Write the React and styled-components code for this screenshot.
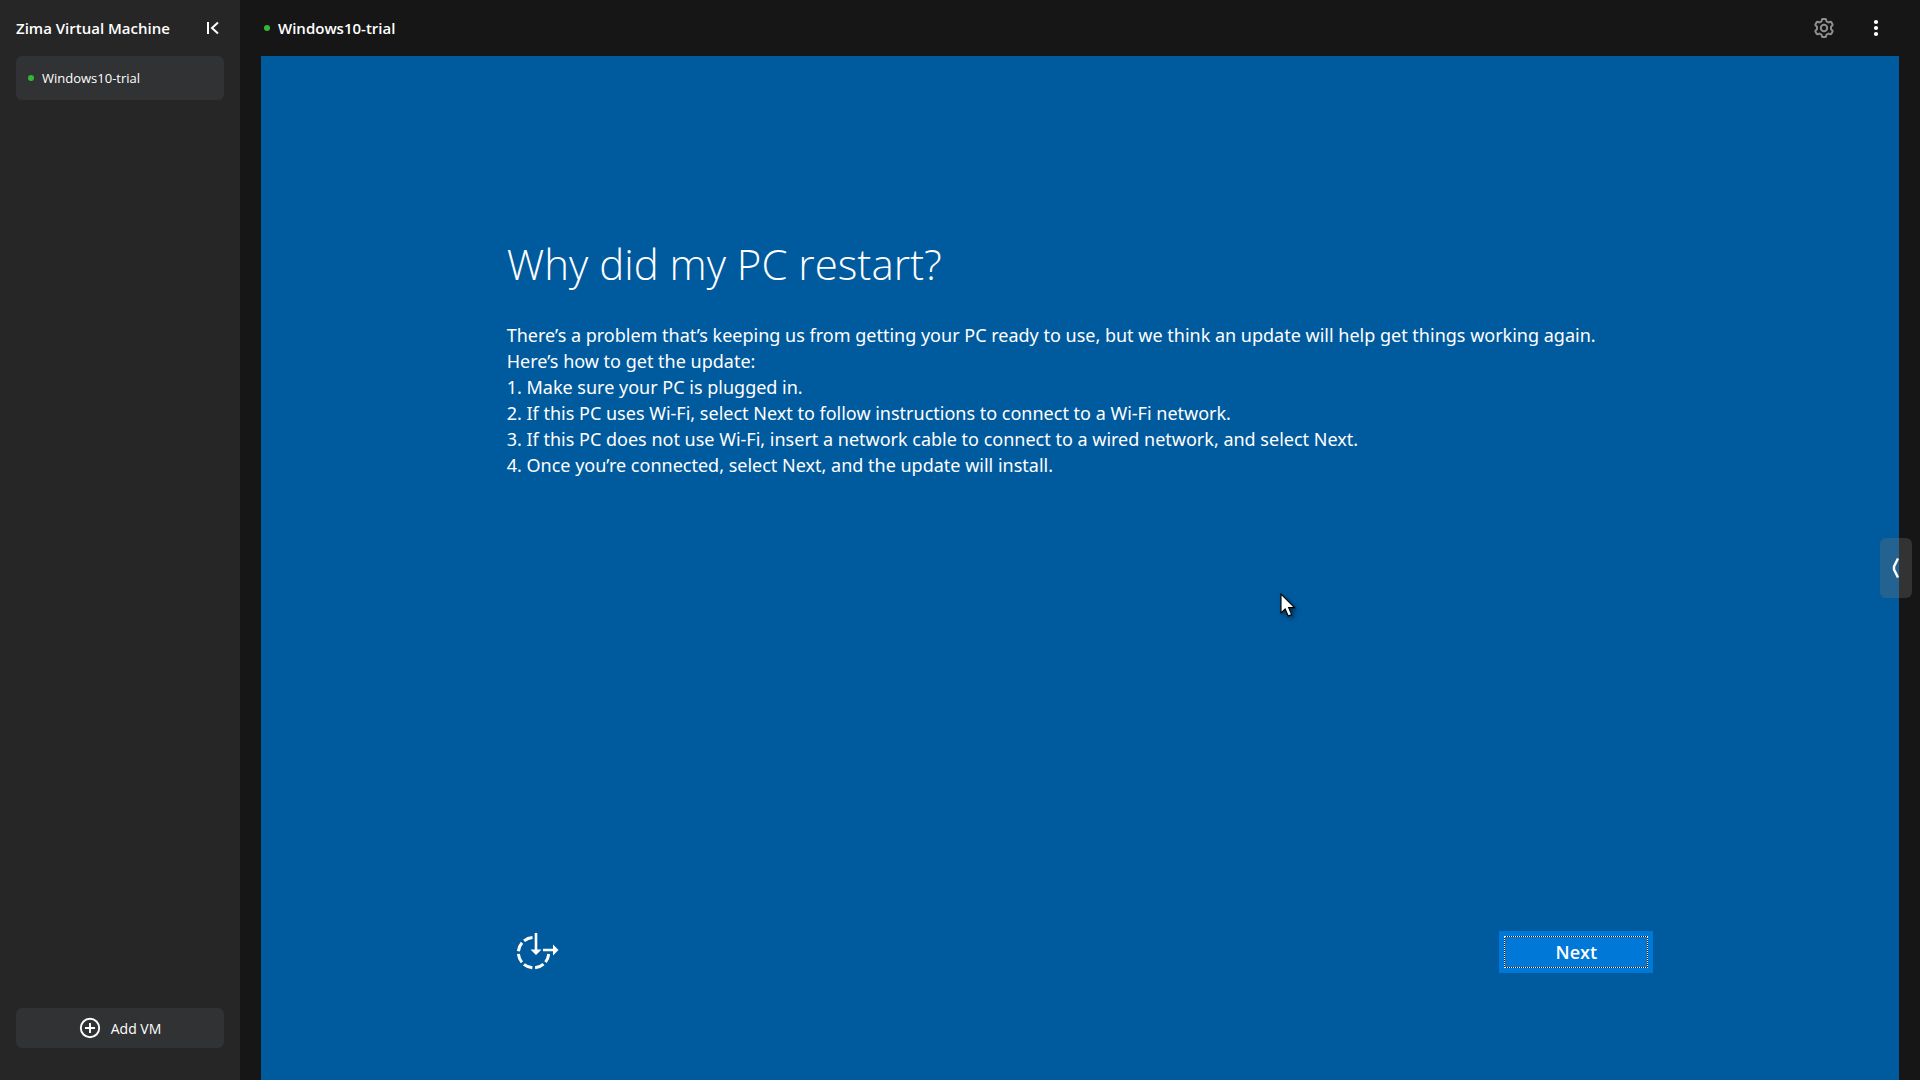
import React, { useState } from 'react';
import styled, { createGlobalStyle } from 'styled-components';

const vmList = [{ id: 1, name: 'Windows10-trial', running: true }];

const steps = [
  'Make sure your PC is plugged in.',
  'If this PC uses Wi-Fi, select Next to follow instructions to connect to a Wi-Fi network.',
  'If this PC does not use Wi-Fi, insert a network cable to connect to a wired network, and select Next.',
  'Once you’re connected, select Next, and the update will install.',
];

const CollapseIcon = () => (
  <svg width="24" height="24" viewBox="0 0 24 24" fill="none" stroke="#fff" strokeWidth="2">
    <path d="M8 6v12M18 6.500l-6 5.500 6 5.500" />
  </svg>
);

const GearIcon = () => (
  <svg width="24" height="24" viewBox="0 0 24 24" fill="none" stroke="#8e8e8e" strokeWidth="2" strokeLinejoin="round">
    <path d="M10.600 2.900h2.800q.5 0 .6.500l.3 1.400q.1.500.6.800l1.100.6q.5.300 1 .1l1.500-.5q.5-.1.700.3l1.400 2.400q.3.400-.1.800l-1.100 1.100q-.4.300-.4.900v1.400q0 .6.400.9l1.100 1.100q.4.400.1.800l-1.400 2.400q-.2.400-.7.300l-1.500-.5q-.5-.2-1 .1l-1.100.6q-.5.300-.6.800l-.3 1.400q-.1.500-.6.500h-2.800q-.5 0-.6-.5l-.3-1.400q-.1-.5-.6-.8l-1.100-.6q-.5-.3-1-.1l-1.500.5q-.5.100-.7-.3l-1.400-2.400q-.3-.4.100-.8l1.100-1.100q.4-.3.400-.9v-1.400q0-.6-.4-.9l-1.100-1.100q-.4-.4-.1-.8l1.400-2.400q.2-.4.700-.3l1.500.5q.5.200 1-.1l1.100-.6q.5-.3.600-.8l.3-1.400q.1-.5.600-.5z" />
    <circle cx="12" cy="12" r="3.200" />
  </svg>
);

const MoreIcon = () => (
  <svg width="24" height="24" viewBox="0 0 24 24" fill="#fff">
    <circle cx="12" cy="6" r="2.100" />
    <circle cx="12" cy="12" r="2.100" />
    <circle cx="12" cy="18" r="2.100" />
  </svg>
);

const AddIcon = () => (
  <svg width="22" height="22" viewBox="0 0 22 22" fill="none" stroke="#fff" strokeWidth="1.900">
    <circle cx="11" cy="11" r="9.200" />
    <path d="M11 6v10M6 11h10" />
  </svg>
);

const EaseIcon = () => (
  <svg width="42" height="38" viewBox="0 0 42 38" fill="none" stroke="#fff" strokeWidth="3">
    <path d="M15.500 4.500A15.200 15.200 0 1 0 31.700 21" strokeDasharray="9.200 2.800" />
    <path d="M19 0v18M26 17h10" strokeWidth="2.600" />
    <path d="M13.500 16.500h11l-5.500 5.500zM36 11.500l5.500 5.500-5.500 5.500z" fill="#fff" stroke="none" />
  </svg>
);

const HandleIcon = () => (
  <svg width="8" height="20" viewBox="0 0 8 20" fill="none" stroke="#fff" strokeWidth="2.400">
    <path d="M6 .5L2 8.500v3l4 8" />
  </svg>
);

const Pointer = () => (
  <svg width="20" height="28" viewBox="0 0 20 28">
    <path d="M1 1v19l4.200-4 3 7 3.400-1.400-3-7h5.900z" fill="#fff" stroke="#000" strokeWidth="1.100" />
  </svg>
);

const App = () => {
  const [selected, setSelected] = useState(1);
  const [open, setOpen] = useState(true);
  const vm = vmList.find((v) => v.id === selected);

  return (
    <>
      <GlobalStyle />
      <Container>
        <Sidebar $open={open}>
          <SideHead>
            <Title>Zima Virtual Machine</Title>
            <IconButton aria-label="Collapse sidebar" onClick={() => setOpen(false)}>
              <CollapseIcon />
            </IconButton>
          </SideHead>
          <VmList>
            {vmList.map((item) => (
              <VmItem key={item.id} onClick={() => setSelected(item.id)}>
                <Dot $running={item.running} />
                {item.name}
              </VmItem>
            ))}
          </VmList>
          <AddButton>
            <AddIcon />
            Add VM
          </AddButton>
        </Sidebar>
        <Main>
          <TopBar>
            <VmName>
              <Dot $running={vm.running} />
              <Title>{vm.name}</Title>
            </VmName>
            <Actions>
              <IconButton aria-label="Settings">
                <GearIcon />
              </IconButton>
              <IconButton aria-label="More">
                <MoreIcon />
              </IconButton>
            </Actions>
          </TopBar>
          <Screen>
            <Heading>Why did my PC restart?</Heading>
            <Message>
              <p>There’s a problem that’s keeping us from getting your PC ready to use, but we think an update will help get things working again.</p>
              <p>Here’s how to get the update:</p>
              {steps.map((step, index) => (
                <p key={step}>
                  {index + 1}. {step}
                </p>
              ))}
            </Message>
            <Footer>
              <EaseButton aria-label="Ease of access">
                <EaseIcon />
              </EaseButton>
              <NextButton>
                <span>Next</span>
              </NextButton>
            </Footer>
            <PointerLayer>
              <Pointer />
            </PointerLayer>
            <Handle aria-label="Open control bar">
              <HandleIcon />
            </Handle>
          </Screen>
        </Main>
      </Container>
    </>
  );
};

export default App;

const GlobalStyle = createGlobalStyle`
  * {
    box-sizing: border-box;
  }
  body {
    margin: 0;
    background: #161616;
    color: #fff;
    font-family: 'Open Sans', 'Noto Sans', sans-serif;
  }
  h1, h2, p {
    margin: 0;
  }
  button {
    border: none;
    padding: 0;
    color: inherit;
    font: inherit;
    cursor: pointer;
  }
  svg {
    display: block;
  }
`;

const Container = styled.div`
  display: flex;
  min-height: 100vh;
`;

const Sidebar = styled.aside`
  display: ${(props) => (props.$open ? 'flex' : 'none')};
  flex-direction: column;
  flex: 0 0 240px;
  padding: 0 16px 32px;
  background: #262626;
`;

const SideHead = styled.div`
  display: flex;
  align-items: center;
  justify-content: space-between;
  height: 56px;
`;

const Title = styled.h2`
  font-size: 15px;
  font-weight: 600;
  line-height: 24px;
  white-space: nowrap;
`;

const IconButton = styled.button`
  background: none;
`;

const VmList = styled.div`
  display: flex;
  flex-direction: column;
  flex: 1;
  gap: 8px;
`;

const VmItem = styled.button`
  display: flex;
  align-items: center;
  gap: 8px;
  height: 44px;
  padding: 0 12px;
  border-radius: 6px;
  background: #313233;
  font-size: 13px;
`;

const Dot = styled.span`
  width: 6px;
  height: 6px;
  border-radius: 50%;
  background: ${(props) => (props.$running ? '#33b833' : '#777')};
`;

const AddButton = styled.button`
  display: flex;
  align-items: center;
  justify-content: center;
  gap: 10px;
  height: 40px;
  border-radius: 6px;
  background: #313233;
  font-size: 14px;
`;

const Main = styled.main`
  display: flex;
  flex-direction: column;
  flex: 1;
  padding: 0 21px;
`;

const TopBar = styled.header`
  display: flex;
  align-items: center;
  justify-content: space-between;
  height: 56px;
`;

const VmName = styled.div`
  display: flex;
  align-items: center;
  gap: 8px;
  padding-left: 3px;
`;

const Actions = styled.div`
  display: flex;
  gap: 28px;
  padding-right: 11px;
`;

const Screen = styled.section`
  position: relative;
  display: flex;
  flex-direction: column;
  flex: 1;
  padding: 178px 15% 107px;
  background: #005a9e;
`;

const Heading = styled.h1`
  font-size: 42px;
  font-weight: 300;
  line-height: 60px;
`;

const Message = styled.div`
  flex: 1;
  padding-top: 28px;
  font-family: 'Noto Sans', 'Open Sans', sans-serif;
  font-size: 18px;
  line-height: 26px;
`;

const Footer = styled.div`
  display: flex;
  align-items: center;
  justify-content: space-between;
`;

const EaseButton = styled.button`
  padding-left: 10px;
  background: none;
`;

const NextButton = styled.button`
  width: 154px;
  height: 42px;
  padding: 5px;
  background: #0078d7;
  font-size: 18px;
  font-weight: 600;
  > span {
    display: flex;
    align-items: center;
    justify-content: center;
    height: 100%;
    border: 1px dotted #fff;
    background: linear-gradient(#0078d7, #0078d7) padding-box, linear-gradient(#111, #111) border-box;
  }
`;

const PointerLayer = styled.div`
  position: absolute;
  top: 52.4%;
  left: 62.2%;
  filter: drop-shadow(2px 2px 2px rgba(0, 0, 0, 0.5));
`;

const Handle = styled.button`
  position: absolute;
  top: 50%;
  right: -13px;
  display: flex;
  align-items: center;
  justify-content: center;
  width: 32px;
  height: 60px;
  border-radius: 6px;
  background: rgba(120, 120, 120, 0.3);
  transform: translateY(-50%);
`;
